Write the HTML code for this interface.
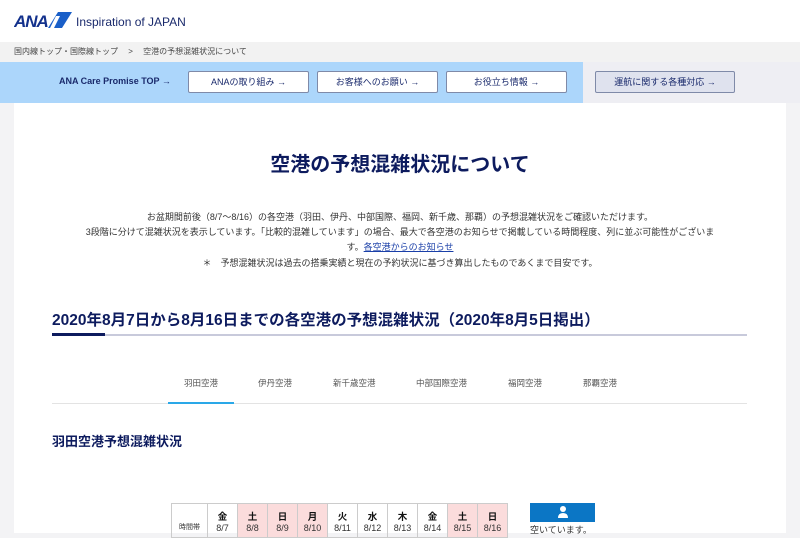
<!DOCTYPE html>
<html><head><meta charset="utf-8"><style>
*{margin:0;padding:0;box-sizing:border-box}
body{width:800px;height:533px;overflow:hidden;background:#f3f3f5;font-family:"Liberation Sans","Noto Sans CJK JP",sans-serif;position:relative;color:#333}
.a{position:absolute}
.btn{position:absolute;top:71px;height:22px;background:#fff;border:1px solid #7f8aa8;border-radius:2px;font-size:9px;color:#1a2a6c;text-align:center;line-height:20px}
.p{font-size:9px;color:#333;text-align:center;width:100%;left:0}
.tab{position:absolute;top:377px;font-size:8.5px;color:#555}
td{border:1px solid #ccc;text-align:center;font-size:9px;width:30px;height:34px;padding:0}
td b{display:block;font-size:9.5px;color:#111}
.r{background:#fbdcdc}
</style></head><body>
<div class="a" style="left:0;top:0;width:800px;height:42px;background:#fff"></div>
<svg class="a" style="left:14px;top:12px" width="58" height="17" viewBox="0 0 58 17">
<text x="0" y="15" font-family="Liberation Sans" font-weight="bold" font-style="italic" font-size="17" fill="#13318c" letter-spacing="-1">ANA</text>
<polygon points="44,0 58,0 48,16 34,16" fill="#1a5fc8"/><polygon points="42,4 46,4 40,16 36,16" fill="#fff"/>
</svg>
<div class="a" style="left:76px;top:15px;font-size:12px;color:#1a2a6c">Inspiration of JAPAN</div>
<div class="a" style="left:0;top:42px;width:800px;height:20px;background:#f2f2f2"></div>
<div class="a" style="left:14px;top:46px;font-size:8px;color:#444">国内線トップ・国際線トップ　 &gt; 　空港の予想混雑状況について</div>
<div class="a" style="left:0;top:62px;width:583px;height:41px;background:#acd6fb"></div>
<div class="a" style="left:583px;top:62px;width:217px;height:41px;background:#eeeef3"></div>
<div class="a" style="left:59px;top:76px;font-size:9px;color:#1a2a6c;font-weight:bold">ANA Care Promise TOP →</div>
<div class="btn" style="left:188px;width:121px">ANAの取り組み →</div>
<div class="btn" style="left:317px;width:121px">お客様へのお願い →</div>
<div class="btn" style="left:446px;width:121px">お役立ち情報 →</div>
<div class="btn" style="left:595px;width:140px;background:#dfe2ee">運航に関する各種対応 →</div>
<div class="a" style="left:14px;top:103px;width:772px;height:430px;background:#fff"></div>
<div class="a" style="left:0;top:148px;width:800px;text-align:center;font-size:20px;color:#0d1b5e;font-weight:bold">空港の予想混雑状況について</div>
<div class="a p" style="top:210px">お盆期間前後（8/7〜8/16）の各空港（羽田、伊丹、中部国際、福岡、新千歳、那覇）の予想混雑状況をご確認いただけます。</div>
<div class="a p" style="top:225px">3段階に分けて混雑状況を表示しています。「比較的混雑しています」の場合、最大で各空港のお知らせで掲載している時間程度、列に並ぶ可能性がございま</div>
<div class="a p" style="top:240px">す。<span style="color:#1a3fa8;text-decoration:underline">各空港からのお知らせ</span></div>
<div class="a p" style="top:256px">＊　予想混雑状況は過去の搭乗実績と現在の予約状況に基づき算出したものであくまで目安です。</div>
<div class="a" style="left:52px;top:308px;font-size:15.5px;color:#0d1b5e;font-weight:bold">2020年8月7日から8月16日までの各空港の予想混雑状況（2020年8月5日掲出）</div>
<div class="a" style="left:52px;top:334px;width:695px;height:2px;background:#c8cadb"></div>
<div class="a" style="left:52px;top:333px;width:53px;height:3px;background:#0d1b5e"></div>
<div class="tab" style="left:184px">羽田空港</div>
<div class="tab" style="left:258px">伊丹空港</div>
<div class="tab" style="left:333px">新千歳空港</div>
<div class="tab" style="left:416px">中部国際空港</div>
<div class="tab" style="left:508px">福岡空港</div>
<div class="tab" style="left:583px">那覇空港</div>
<div class="a" style="left:52px;top:403px;width:695px;height:1px;background:#e3e3e3"></div>
<div class="a" style="left:168px;top:402px;width:66px;height:2px;background:#2aa8e8"></div>
<div class="a" style="left:52px;top:431px;font-size:13px;color:#0d1b5e;font-weight:bold">羽田空港予想混雑状況</div>
<table class="a" style="left:171px;top:503px;border-collapse:collapse">
<tr><td style="width:36px;font-size:7px;padding-top:12px">時間帯</td><td><b>金</b>8/7</td><td class="r"><b>土</b>8/8</td><td class="r"><b>日</b>8/9</td><td class="r"><b>月</b>8/10</td><td><b>火</b>8/11</td><td><b>水</b>8/12</td><td><b>木</b>8/13</td><td><b>金</b>8/14</td><td class="r"><b>土</b>8/15</td><td class="r"><b>日</b>8/16</td></tr></table>
<div class="a" style="left:530px;top:503px;width:65px;height:19px;background:#0b76c5"></div>
<svg class="a" style="left:557px;top:505px" width="12" height="14" viewBox="0 0 12 14"><circle cx="6" cy="4" r="3" fill="#fff"/><path d="M1 13 Q1 8 6 8 Q11 8 11 13Z" fill="#fff"/></svg>
<div class="a" style="left:530px;top:523px;font-size:9px;color:#333">空いています。</div>
</body></html>
